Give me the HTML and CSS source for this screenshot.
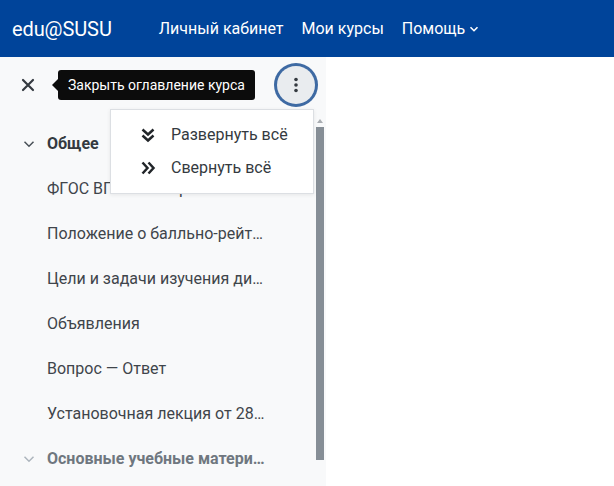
FILE: index.html
```html
<!DOCTYPE html>
<html lang="ru">
<head>
<meta charset="utf-8">
<title>edu@SUSU</title>
<link rel="stylesheet" href="styles.css">
</head>
<body>
<header class="navbar">
  <span class="brand">edu@SUSU</span>
  <nav class="nav-links">
    <a class="nav-link">Личный кабинет</a>
    <a class="nav-link">Мои курсы</a>
    <a class="nav-link">Помощь
      <svg class="nav-caret" width="10" height="10" viewBox="0 0 10 10"><path d="M1.5 3.2 L5 6.7 L8.5 3.2" fill="none" stroke="#fff" stroke-width="1.6"/></svg>
    </a>
  </nav>
</header>
<main class="page">
  <aside class="drawer">
    <div class="drawer-header">
      <button class="close-btn" aria-label="close">
        <svg width="14" height="14" viewBox="0 0 14 14"><path d="M2 2 L12 12 M12 2 L2 12" stroke="#343a40" stroke-width="2.2" stroke-linecap="round"/></svg>
      </button>
      <button class="more-btn" aria-label="more">
        <svg width="4" height="16" viewBox="0 0 4 16"><circle cx="2" cy="2.5" r="1.8" fill="#343a40"/><circle cx="2" cy="8" r="1.8" fill="#343a40"/><circle cx="2" cy="13.5" r="1.8" fill="#343a40"/></svg>
      </button>
    </div>
    <div class="tooltip">Закрыть оглавление курса</div>
    <div class="dropdown">
      <div class="dropdown-item">
        <svg class="dd-icon" width="16" height="16" viewBox="0 0 16 16"><path d="M2.5 2.5 L8 7.5 L13.5 2.5 M2.5 8.5 L8 13.5 L13.5 8.5" fill="none" stroke="#212529" stroke-width="2.5"/></svg>
        <span>Развернуть всё</span>
      </div>
      <div class="dropdown-item">
        <svg class="dd-icon" width="16" height="16" viewBox="0 0 16 16"><path d="M2.5 2.5 L7.5 8 L2.5 13.5 M8.5 2.5 L13.5 8 L8.5 13.5" fill="none" stroke="#212529" stroke-width="2.5"/></svg>
        <span>Свернуть всё</span>
      </div>
    </div>
    <div class="drawer-body">
      <ul class="course-index">
        <li class="section">
          <svg class="sec-caret" width="12" height="12" viewBox="0 0 12 12"><path d="M1.5 3.8 L6 8.2 L10.5 3.8" fill="none" stroke="#495057" stroke-width="1.5"/></svg>
          <span class="item-text">Общее</span>
        </li>
        <li class="item"><span class="item-text">ФГОС ВПО по направлен…</span></li>
        <li class="item"><span class="item-text">Положение о балльно-рейт…</span></li>
        <li class="item"><span class="item-text">Цели и задачи изучения ди…</span></li>
        <li class="item"><span class="item-text">Объявления</span></li>
        <li class="item"><span class="item-text">Вопрос — Ответ</span></li>
        <li class="item"><span class="item-text">Установочная лекция от 28…</span></li>
        <li class="section muted">
          <svg class="sec-caret" width="12" height="12" viewBox="0 0 12 12"><path d="M1.5 3.8 L6 8.2 L10.5 3.8" fill="none" stroke="#adb5bd" stroke-width="1.5"/></svg>
          <span class="item-text">Основные учебные матери…</span>
        </li>
      </ul>
      <div class="scrollbar">
        <span class="scroll-up"></span>
        <span class="scroll-thumb"></span>
      </div>
    </div>
  </aside>
  <section class="content"></section>
</main>
</body>
</html>
```
FILE: styles.css
```css
* { box-sizing: border-box; }
html, body { margin: 0; padding: 0; }
body {
  font-family: Roboto, "Liberation Sans", sans-serif;
  background: #fff;
  color: #1d2125;
  width: 614px;
  height: 486px;
  overflow: hidden;
}
.navbar {
  height: 57px;
  background: #00449a;
  color: #fff;
  display: flex;
  align-items: center;
  padding: 0 12px;
}
.brand {
  font-size: 20px;
  margin-right: 47px;
  letter-spacing: -0.1px;
}
.nav-links {
  display: flex;
  gap: 18px;
  font-size: 16px;
}
.nav-link {
  color: #fff;
  display: flex;
  align-items: center;
  gap: 4px;
}
.nav-caret { margin-top: 1px; }
.page {
  display: flex;
  height: 429px;
}
.drawer {
  width: 326px;
  background: #f8f9fa;
  position: relative;
  display: flex;
  flex-direction: column;
}
.content { flex: 1; background: #fff; }
.drawer-header {
  height: 56px;
  display: flex;
  align-items: center;
  justify-content: space-between;
  padding: 0 11px 0 16px;
}
.close-btn {
  width: 24px;
  height: 24px;
  border: 0;
  background: transparent;
  display: flex;
  align-items: center;
  justify-content: center;
  padding: 0;
}
.more-btn {
  width: 38px;
  height: 38px;
  border-radius: 50%;
  border: 0;
  background: #e9ecef;
  box-shadow: 0 0 0 3px #3e6aa3;
  display: flex;
  align-items: center;
  justify-content: center;
  padding: 0;
}
.tooltip {
  position: absolute;
  left: 58px;
  top: 13px;
  height: 30px;
  padding: 0 10px;
  background: #0c0c0c;
  color: #fff;
  font-size: 14px;
  border-radius: 3px;
  display: flex;
  align-items: center;
}
.tooltip::before {
  content: "";
  position: absolute;
  left: -6px;
  top: 9px;
  border-style: solid;
  border-width: 6px 6px 6px 0;
  border-color: transparent #0c0c0c transparent transparent;
}
.dropdown {
  position: absolute;
  left: 110px;
  top: 52px;
  width: 204px;
  height: 85px;
  background: #fff;
  border: 1px solid #dcdfe3;
  box-shadow: 0 1px 4px rgba(0,0,0,0.08);
  padding: 8px 0;
  z-index: 2;
}
.dropdown-item {
  height: 33px;
  display: flex;
  align-items: center;
  padding-left: 29px;
  gap: 15px;
  font-size: 16px;
  color: #343a40;
}
.dd-icon { flex: none; }
.drawer-body {
  flex: 1;
  display: flex;
  min-height: 0;
}
.course-index {
  list-style: none;
  margin: 0;
  padding: 8px 0 0 0;
  flex: 1;
}
.course-index li {
  height: 45px;
  display: flex;
  align-items: center;
  font-size: 16px;
  color: #3f454b;
}
.item { padding-left: 47px; }
.section { padding-left: 23px; }
.sec-caret { margin-right: 12px; flex: none; }
.section .item-text { font-weight: 700; color: #343a40; }
.section.muted .item-text { color: #6f777f; }
.item-text {
  white-space: nowrap;
}
.scrollbar {
  width: 10px;
  display: flex;
  flex-direction: column;
  align-items: flex-start;
}
.scroll-up {
  margin: 6px 0 0 1px;
  width: 0;
  height: 0;
  border-style: solid;
  border-width: 0 3px 4px 3px;
  border-color: transparent transparent #a9adb2 transparent;
}
.scroll-thumb {
  margin-top: 4px;
  width: 8px;
  height: 333px;
  background: #868e96;
}
```
